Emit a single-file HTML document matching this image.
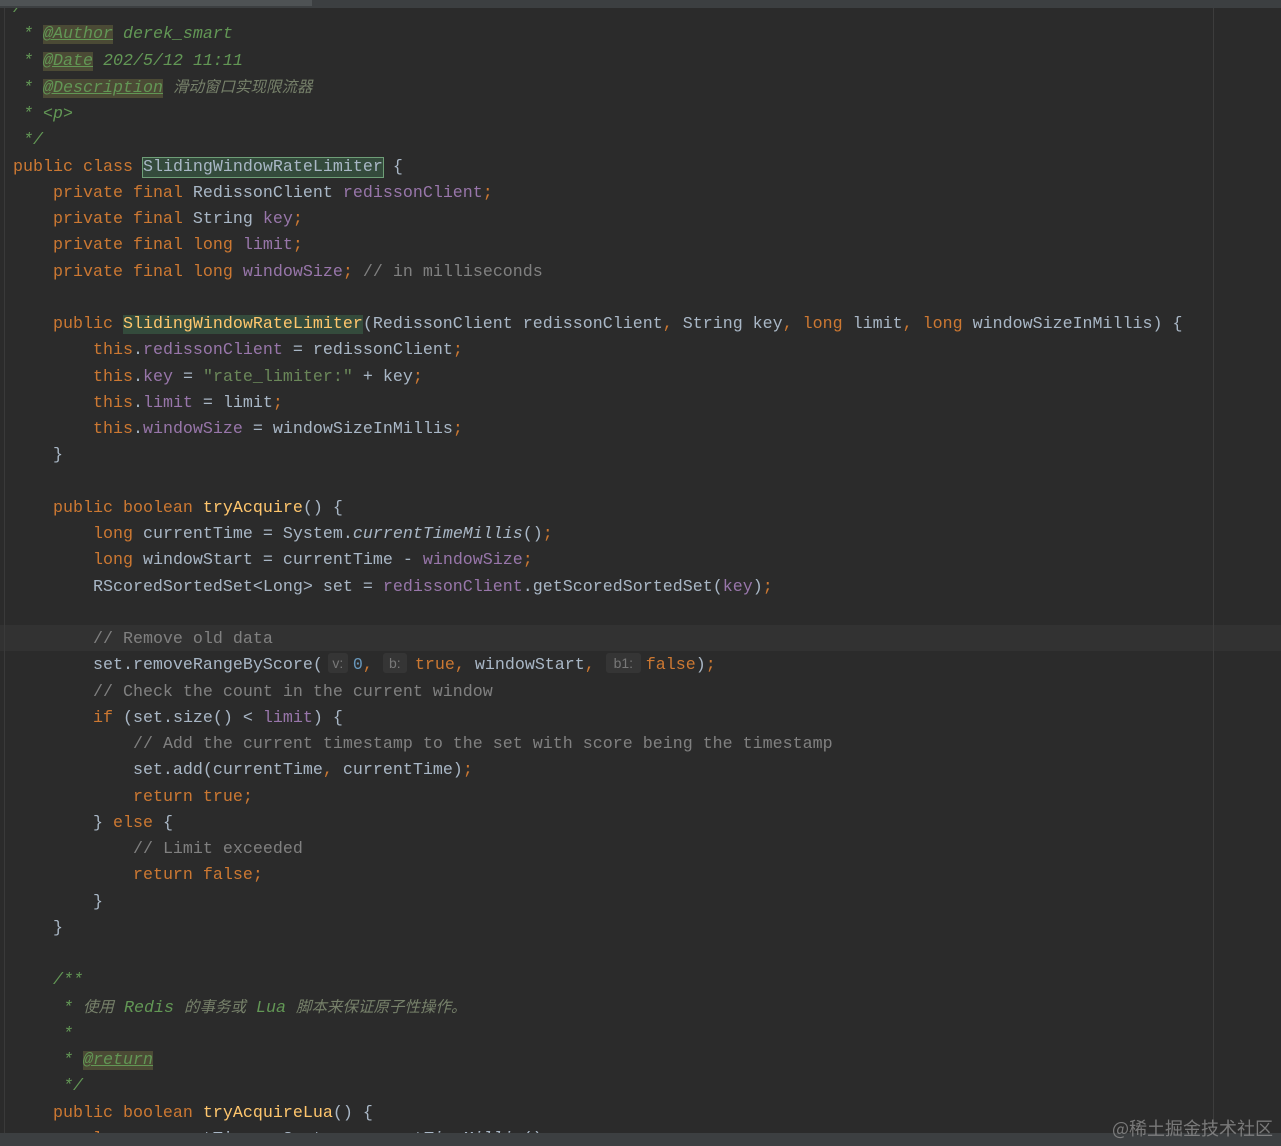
<!DOCTYPE html>
<html><head><meta charset="utf-8"><style>
html,body{margin:0;padding:0;background:#2b2b2b;width:1281px;height:1146px;overflow:hidden;position:relative}
pre{position:absolute;left:13px;top:-4px;margin:0;font-family:"Liberation Mono","Noto Sans CJK SC",monospace;font-size:16.67px;line-height:26.25px;color:#a9b7c6;white-space:pre}
.k{color:#cc7832}.f{color:#9876aa}.m{color:#ffc66d}.c{color:#808080}.d{color:#629755;font-style:italic}
.n{color:#6897bb}.s{color:#6a8759}.t{background:#4b4a35;text-decoration:underline;color:#629755}
.z{color:#76806a;font-style:italic;font-size:15.5px}.i{font-style:italic}
.h{background:#344b3c;outline:1px solid #6e9e77}.h2{background:#344b3c}
.p{display:inline-block;background:#353535;color:#787878;font-family:"Liberation Sans",sans-serif;font-size:14px;border-radius:3px;line-height:20px;text-align:center;vertical-align:1px}
#top{position:absolute;left:0;top:0;width:1281px;height:8px;background:#3c3f41}
#tab{position:absolute;left:0;top:0;width:312px;height:6px;background:#4e5254}
#bot{position:absolute;left:0;top:1133px;width:1281px;height:13px;background:#3c3f41}
#cur{position:absolute;left:0;top:625px;width:1281px;height:26px;background:#323232}
#mar{position:absolute;left:1213px;top:8px;width:1px;height:1125px;background:#3d3d3d}
#gut{position:absolute;left:4px;top:8px;width:1px;height:1125px;background:#3a3a3a}
#wm{position:absolute;right:8px;top:1115px;color:#9a9a9a;font:18px "Noto Sans CJK SC",sans-serif;opacity:.7}
</style></head><body>
<div id="cur"></div><div id="mar"></div><div id="gut"></div>
<pre><span class="d">/**</span>
<span class="d"> * <span class="t">@Author</span> derek_smart</span>
<span class="d"> * <span class="t">@Date</span> 202/5/12 11:11</span>
<span class="d"> * <span class="t">@Description</span> <span class="z">滑动窗口实现限流器</span></span>
<span class="d"> * &lt;p&gt;</span>
<span class="d"> */</span>
<span class="k">public class </span><span class="h">SlidingWindowRateLimiter</span> {
    <span class="k">private final </span>RedissonClient <span class="f">redissonClient</span><span class="k">;</span>
    <span class="k">private final </span>String <span class="f">key</span><span class="k">;</span>
    <span class="k">private final long </span><span class="f">limit</span><span class="k">;</span>
    <span class="k">private final long </span><span class="f">windowSize</span><span class="k">; </span><span class="c">// in milliseconds</span>

    <span class="k">public </span><span class="h2 m">SlidingWindowRateLimiter</span>(RedissonClient redissonClient<span class="k">, </span>String key<span class="k">, long </span>limit<span class="k">, long </span>windowSizeInMillis) {
        <span class="k">this</span>.<span class="f">redissonClient</span> = redissonClient<span class="k">;</span>
        <span class="k">this</span>.<span class="f">key</span> = <span class="s">"rate_limiter:"</span> + key<span class="k">;</span>
        <span class="k">this</span>.<span class="f">limit</span> = limit<span class="k">;</span>
        <span class="k">this</span>.<span class="f">windowSize</span> = windowSizeInMillis<span class="k">;</span>
    }

    <span class="k">public boolean </span><span class="m">tryAcquire</span>() {
        <span class="k">long </span>currentTime = System.<span class="i">currentTimeMillis</span>()<span class="k">;</span>
        <span class="k">long </span>windowStart = currentTime - <span class="f">windowSize</span><span class="k">;</span>
        RScoredSortedSet&lt;Long&gt; set = <span class="f">redissonClient</span>.getScoredSortedSet(<span class="f">key</span>)<span class="k">;</span>

        <span class="c">// Remove old data</span>
        set.removeRangeByScore(<span class="p" style="margin:0 5px;width:20px">v:</span><span class="n">0</span><span class="k">,</span><span class="p" style="margin:0 8px 0 10px;width:24px">b:</span><span class="k">true, </span>windowStart<span class="k">,</span><span class="p" style="margin:0 5px 0 11px;width:35px">b1:</span><span class="k">false</span>)<span class="k">;</span>
        <span class="c">// Check the count in the current window</span>
        <span class="k">if </span>(set.size() &lt; <span class="f">limit</span>) {
            <span class="c">// Add the current timestamp to the set with score being the timestamp</span>
            set.add(currentTime<span class="k">, </span>currentTime)<span class="k">;</span>
            <span class="k">return true;</span>
        } <span class="k">else </span>{
            <span class="c">// Limit exceeded</span>
            <span class="k">return false;</span>
        }
    }

    <span class="d">/**</span>
<span class="d">     * <span class="z">使用</span> Redis <span class="z">的事务或</span> Lua <span class="z">脚本来保证原子性操作。</span></span>
<span class="d">     *</span>
<span class="d">     * <span class="t">@return</span></span>
<span class="d">     */</span>
    <span class="k">public boolean </span><span class="m">tryAcquireLua</span>() {
        <span class="k">long </span>currentTime = System.<span class="i">currentTimeMillis</span>()<span class="k">;</span>
</pre>
<div id="top"></div><div id="tab"></div>
<div id="bot"></div>
<div id="wm">@稀土掘金技术社区</div>
</body></html>
